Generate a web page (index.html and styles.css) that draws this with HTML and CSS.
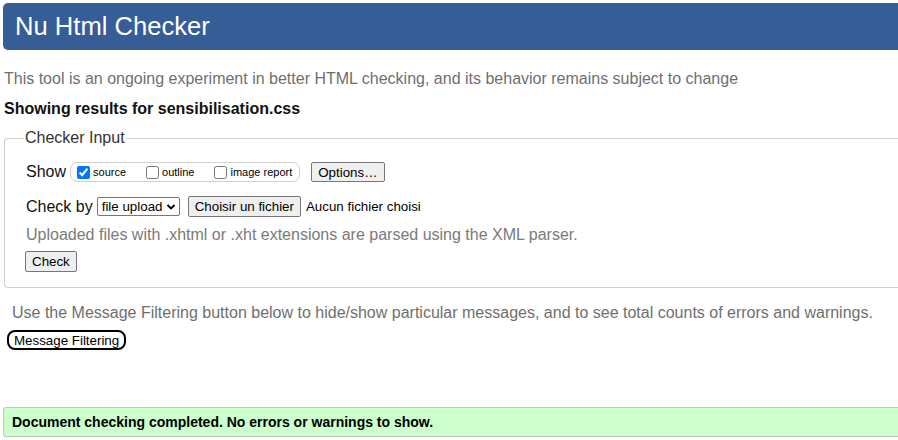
FILE: index.html
```html
<!DOCTYPE html>
<html lang="en">
<head>
<meta charset="utf-8">
<title>Nu Html Checker</title>
<link rel="stylesheet" href="styles.css">
</head>
<body>
<div class="page">
  <h1 class="banner">Nu Html Checker</h1>
  <p class="about">This tool is an ongoing experiment in better HTML checking, and its behavior remains subject to change</p>
  <p class="results">Showing results for sensibilisation.css</p>
  <fieldset class="input">
    <legend>Checker Input</legend>
    <div class="row show-row">
      <span class="lbl">Show</span>
      <span class="pill">
        <label><input type="checkbox" checked> source</label>
        <label><input type="checkbox"> outline</label>
        <label><input type="checkbox"> image report</label>
      </span>
      <button class="btn options" type="button">Options…</button>
    </div>
    <div class="row by-row">
      <span class="lbl">Check by</span>
      <span class="select"><span class="sel-text">file upload</span>
        <svg width="10" height="8" viewBox="0 0 10 8"><path d="M1.5 2 L5 5.5 L8.5 2" fill="none" stroke="#000" stroke-width="1.8"/></svg>
      </span>
      <button class="btn file" type="button">Choisir un fichier</button>
      <span class="nofile">Aucun fichier choisi</span>
    </div>
    <p class="hint">Uploaded files with .xhtml or .xht extensions are parsed using the XML parser.</p>
    <button class="btn check" type="button">Check</button>
  </fieldset>
  <p class="filter-note">Use the Message Filtering button below to hide/show particular messages, and to see total counts of errors and warnings.</p>
  <button class="filter-btn" type="button">Message Filtering</button>
  <div class="success">Document checking completed. No errors or warnings to show.</div>
</div>
</body>
</html>
```

FILE: styles.css
```css
html, body {
  overflow: hidden;
}
body {
  margin: 0;
  font-family: "Liberation Sans", Arial, sans-serif;
  color: #000;
  background: #fff;
}
.page {
  width: 920px;
  padding: 3px 0 0 3px;
}
.banner {
  margin: 0;
  height: 47px;
  background: #365d95;
  color: #fff;
  font-weight: normal;
  font-size: 25.6px;
  line-height: 47px;
  padding-left: 12px;
  border-radius: 5px 0 0 5px;
}
.about {
  margin: 19px 0 0 1px;
  font-size: 16px;
  line-height: 20px;
  color: #6f6f6f;
}
.results {
  margin: 10px 0 0 1px;
  font-size: 16px;
  font-weight: bold;
  line-height: 20px;
  color: #111;
}
.input {
  margin: 10px 0 0 1px;
  border: 1px solid #cfcfcf;
  border-right: none;
  border-radius: 4px 0 0 4px;
  padding: 15px 0 15px 21px;
}
.input legend {
  padding: 0 1px;
  margin-left: -2px;
  font-size: 16px;
  color: #333;
}
.row {
  display: flex;
  align-items: center;
}
.lbl {
  font-size: 16px;
  color: #111;
  margin-right: 4px;
  white-space: nowrap;
}
.pill {
  display: inline-flex;
  align-items: center;
  height: 18px;
  border: 1px solid #cfcfcf;
  border-radius: 7px;
  padding: 0 7px 0 6px;
  gap: 20px;
  font-size: 11px;
}
.pill label {
  display: inline-flex;
  align-items: center;
  white-space: nowrap;
}
.pill input {
  margin: 0 3px 0 0;
  width: 13px;
  height: 13px;
}
.btn {
  font-family: "Liberation Sans", Arial, sans-serif;
  font-size: 13.33px;
  background: #efefef;
  border: 1px solid #767676;
  border-radius: 2px;
  color: #000;
  padding: 0 6px;
  white-space: nowrap;
}
.options {
  margin-left: 11px;
  height: 20px;
}
.by-row {
  margin-top: 14px;
}
.select {
  display: inline-flex;
  align-items: center;
  justify-content: space-between;
  box-sizing: border-box;
  width: 83px;
  height: 19px;
  border: 1px solid #767676;
  border-radius: 2px;
  font-size: 13.33px;
  padding: 0 3px 0 4px;
  white-space: nowrap;
}
.file {
  margin-left: 8px;
  height: 21px;
}
.nofile {
  margin-left: 5px;
  font-size: 13.33px;
  white-space: nowrap;
}
.hint {
  margin: 8px 0 0 0;
  font-size: 16px;
  line-height: 20px;
  color: #7a7a7a;
}
.check {
  margin-top: 6px;
  margin-left: -1px;
  height: 21px;
}
.filter-note {
  margin: 15px 0 0 9px;
  font-size: 16px;
  line-height: 20px;
  color: #6f6f6f;
}
.filter-btn {
  margin: 7px 0 0 4px;
  display: block;
  height: 20px;
  border: 2px solid #000;
  border-radius: 8px;
  background: #fff;
  font-family: "Liberation Sans", Arial, sans-serif;
  font-size: 13.33px;
  padding: 0 5px;
  color: #000;
}
.success {
  margin-top: 57px;
  height: 28px;
  line-height: 28px;
  background: #ccffcc;
  border: 1px solid #c4c4c4;
  border-right: none;
  border-radius: 3px 0 0 3px;
  padding-left: 8px;
  font-size: 14px;
  font-weight: bold;
}
```
